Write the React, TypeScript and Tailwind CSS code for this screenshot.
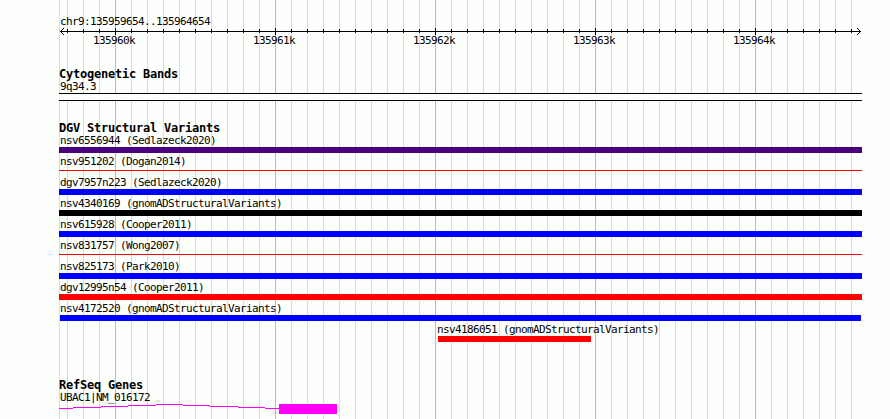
const MINOR_LINES = [59, 67, ...Array.from({ length: 49 }, (_, i) => 83 + i * 16)]

const isMajor = (x: number) => x > 67 && (x - 115) % 160 === 0

const AXIS_LABELS = ['135960k', '135961k', '135962k', '135963k', '135964k']

interface Variant {
  name: string
  color: string
  offset?: string
  bar?: string
}

const VARIANTS: Variant[] = [
  { name: 'nsv6556944 (Sedlazeck2020)', color: 'bg-[#4b0082]' },
  { name: 'nsv951202 (Dogan2014)', color: 'bg-[#f00]', bar: 'mt-0.5 mb-[3px] h-px w-[803px]' },
  { name: 'dgv7957n223 (Sedlazeck2020)', color: 'bg-[#00f]' },
  { name: 'nsv4340169 (gnomADStructuralVariants)', color: 'bg-black' },
  { name: 'nsv615928 (Cooper2011)', color: 'bg-[#00f]' },
  { name: 'nsv831757 (Wong2007)', color: 'bg-[#f00]', bar: 'mt-0.5 mb-[3px] h-px w-[803px]' },
  { name: 'nsv825173 (Park2010)', color: 'bg-[#00f]' },
  { name: 'dgv12995n54 (Cooper2011)', color: 'bg-[#f00]' },
  { name: 'nsv4172520 (gnomADStructuralVariants)', color: 'bg-[#00f]', bar: 'ml-px h-1.5 w-[801px]' },
  { name: 'nsv4186051 (gnomADStructuralVariants)', color: 'bg-[#f00]', offset: 'ml-[377px]', bar: 'ml-0.5 h-1.5 w-[153px]' },
]

function Label({ children }: { children: string }) {
  return (
    <div className="h-[15px] pt-px pl-px text-[11px] leading-[15px] tracking-[-0.622px] whitespace-pre">{children}</div>
  )
}

function Heading({ children }: { children: string }) {
  return <h2 className="h-3 text-[12px] leading-3 font-bold tracking-[-0.224px] whitespace-pre">{children}</h2>
}

function Grid() {
  return (
    <svg className="absolute inset-0" width="890" height="419" shapeRendering="crispEdges">
      {MINOR_LINES.map((x) => (
        <rect key={x} x={x} y="0" width="1" height="419" fill={isMajor(x) ? '#87ceeb' : '#afeeee'} />
      ))}
    </svg>
  )
}

function Axis() {
  return (
    <svg className="block" width="803" height="7" shapeRendering="crispEdges">
      <rect x="1" y="3" width="801" height="1" />
      {/* Arrow heads */}
      {[1, 2, 3].map((d) => (
        <g key={d}>
          <rect x={1 + d} y={3 - d} width="1" height="1" />
          <rect x={1 + d} y={3 + d} width="1" height="1" />
          <rect x={801 - d} y={3 - d} width="1" height="1" />
          <rect x={801 - d} y={3 + d} width="1" height="1" />
        </g>
      ))}
      {/* Ticks */}
      {MINOR_LINES.slice(1).map((x) => (
        <rect key={x} x={x - 59} y={isMajor(x) ? 0 : 1} width="1" height={isMajor(x) ? 7 : 4} />
      ))}
    </svg>
  )
}

function Gene() {
  return (
    <svg className="block" width="803" height="10" shapeRendering="crispEdges" fill="#f0f">
      <rect x="0" y="4" width="14" height="1" />
      <rect x="14" y="3" width="28" height="1" />
      <rect x="42" y="2" width="27" height="1" />
      <rect x="69" y="1" width="28" height="1" />
      <rect x="97" y="0" width="27" height="1" />
      <rect x="124" y="1" width="27" height="1" />
      <rect x="151" y="2" width="28" height="1" />
      <rect x="179" y="3" width="27" height="1" />
      <rect x="206" y="4" width="14" height="1" />
      <rect x="220" y="0" width="58" height="10" />
    </svg>
  )
}

export default function App() {
  return (
    <div className="relative h-[419px] w-[890px] overflow-hidden bg-[#fdfffc] font-['DejaVu_Sans_Mono',monospace] text-black">
      <Grid />
      <main className="relative ml-[59px] w-[803px] pt-[13px]">
        <Label>chr9:135959654..135964654</Label>
        <Axis />
        <div className="-mt-[3px] ml-[33px] flex gap-[118px]">
          {AXIS_LABELS.map((label) => (
            <div key={label} className="w-[42px]">
              <Label>{label}</Label>
            </div>
          ))}
        </div>

        <section className="mt-[21px]">
          <Heading>Cytogenetic Bands</Heading>
          <div className="-mt-0.5">
            <Label>9q34.3</Label>
          </div>
          <div className="h-2 border-y border-black bg-[#fdfffc]" />
        </section>

        <section className="mt-[21px]">
          <Heading>DGV Structural Variants</Heading>
          <div className="-mt-0.5">
            {VARIANTS.map((v) => (
              <div key={v.name} className={v.offset}>
                <Label>{v.name}</Label>
                <div className={`${v.color} ${v.bar ?? 'h-1.5 w-[803px]'}`} />
              </div>
            ))}
          </div>
        </section>

        <section className="mt-[37px]">
          <Heading>RefSeq Genes</Heading>
          <div className="-mt-0.5">
            <Label>UBAC1|NM_016172</Label>
            <Gene />
          </div>
        </section>
      </main>
    </div>
  )
}
